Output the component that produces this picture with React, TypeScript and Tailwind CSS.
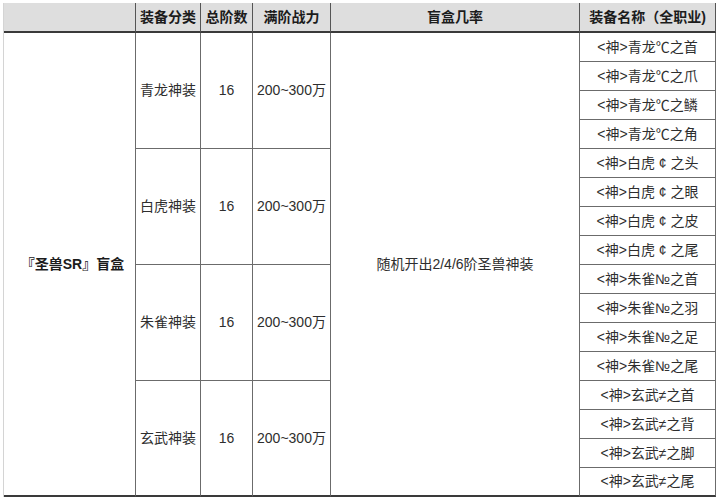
import React from "react";

const groups = [
  { name: "青龙神装", row: "row-start-2", mark: "℃", parts: ["首", "爪", "鳞", "角"], beast: "青龙" },
  { name: "白虎神装", row: "row-start-6", mark: " ¢ ", parts: ["头", "眼", "皮", "尾"], beast: "白虎" },
  { name: "朱雀神装", row: "row-start-10", mark: "№", parts: ["首", "羽", "足", "尾"], beast: "朱雀" },
  { name: "玄武神装", row: "row-start-14", mark: "≠", parts: ["首", "背", "脚", "尾"], beast: "玄武" },
];

const nameRows = [
  "row-start-2", "row-start-3", "row-start-4", "row-start-5",
  "row-start-6", "row-start-7", "row-start-8", "row-start-9",
  "row-start-10", "row-start-11", "row-start-12", "row-start-13",
  "row-start-14", "row-start-15", "row-start-16", "row-start-17",
];

const cell = "flex items-center justify-center whitespace-nowrap border-r border-b border-[#6b6b6b]";
const head = "flex items-center justify-center whitespace-nowrap border-r border-b-2 border-[#555] border-b-[#3a3a3a] bg-[#dedede] font-bold text-[#1c1c1c]";

const App: React.FC = () => {
  const names = groups.flatMap((g) => g.parts.map((p) => `<神>${g.beast}${g.mark}之${p}`));

  return (
    <div
      className="w-[717px] h-[500px] bg-white pt-[3px] text-[14px] text-[#2e2e2e]"
      style={{ fontFamily: '"Liberation Sans", "Noto Sans CJK SC", sans-serif' }}
    >
      <div className="ml-[3px] border-l border-[#d4d4d4] grid grid-cols-[132px_65px_52px_78px_249px_136px] grid-rows-[30px_repeat(16,29px)]">
        {/* header */}
        <div className="row-start-1 col-start-1 border-r border-b-2 border-r-[#555] border-b-[#3a3a3a] bg-[#dedede]" />
        <div className={`row-start-1 col-start-2 ${head}`}>装备分类</div>
        <div className={`row-start-1 col-start-3 ${head}`}>总阶数</div>
        <div className={`row-start-1 col-start-4 ${head}`}>满阶战力</div>
        <div className={`row-start-1 col-start-5 ${head}`}>盲盒几率</div>
        <div className={`row-start-1 col-start-6 ${head}`}>装备名称（全职业)</div>

        {/* box */}
        <div className="row-start-2 row-span-16 col-start-1 flex items-center justify-center border-r border-b-2 border-r-[#6b6b6b] border-b-[#3a3a3a] font-bold text-[#1c1c1c] pl-[6px]">
          『圣兽SR』盲盒
        </div>

        {groups.map((g, i) => {
          const last = i === groups.length - 1 ? "border-b-2 border-b-[#3a3a3a]" : "";
          return (
            <React.Fragment key={g.name}>
              <div className={`${g.row} row-span-4 col-start-2 ${cell} ${last}`}>{g.name}</div>
              <div className={`${g.row} row-span-4 col-start-3 ${cell} ${last}`}>16</div>
              <div className={`${g.row} row-span-4 col-start-4 ${cell} ${last}`}>200~300万</div>
            </React.Fragment>
          );
        })}

        <div className={`row-start-2 row-span-16 col-start-5 ${cell} border-b-2 border-b-[#3a3a3a]`}>
          随机开出2/4/6阶圣兽神装
        </div>

        {names.map((n, i) => (
          <div
            key={n}
            className={`${nameRows[i]} col-start-6 ${cell} ${i === names.length - 1 ? "border-b-2 border-b-[#3a3a3a]" : ""}`}
          >
            {n}
          </div>
        ))}
      </div>
    </div>
  );
};

export default App;
